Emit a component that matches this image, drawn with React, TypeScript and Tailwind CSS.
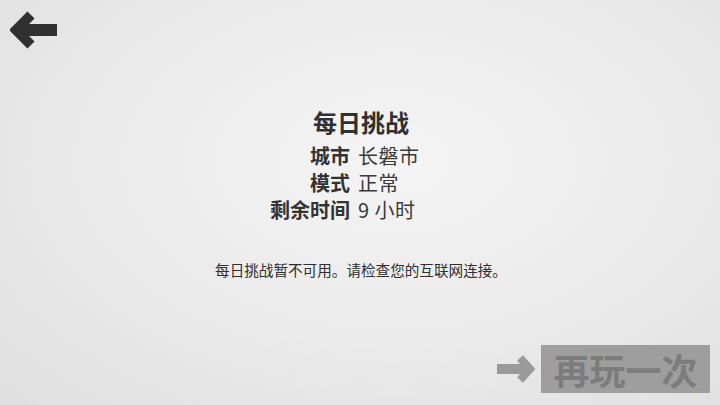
import React from "react";

export default function App() {
  const rows: [string, string][] = [
    ["城市", "长磐市"],
    ["模式", "正常"],
    ["剩余时间", "9 小时"],
  ];
  return (
    <div
      className="w-[720px] h-[405px] flex flex-col overflow-hidden bg-[radial-gradient(ellipse_at_55%_40%,#f4f4f4_0%,#ebebeb_50%,#dfdfdf_100%)]"
      style={{ fontFamily: '"Noto Sans CJK SC", "Noto Sans", sans-serif' }}
    >
      <div className="h-[60px] pl-[10px] pt-[10px]">
        <svg width="50" height="40" viewBox="0 0 50 40">
          <polyline points="21,5 6,20 21,35" fill="none" stroke="#303030" strokeWidth="10" strokeLinejoin="miter" strokeLinecap="butt" />
          <rect x="11" y="14" width="36" height="12" fill="#303030" />
        </svg>
      </div>

      <div className="flex flex-col items-center mt-[46px]">
        <div className="text-[24px] leading-[32px] font-bold text-[#303030] pl-[2px]">每日挑战</div>
      </div>
      <div className="grid grid-cols-[350px_1fr] gap-x-[8px] mt-[4px] text-[20px] leading-[27px]">
        {rows.map(([k, v]) => (
          <React.Fragment key={k}>
            <div className="text-right font-bold text-[#333]">{k}</div>
            <div className="text-[#3a3a3a] tracking-[0.5px]">{v}</div>
          </React.Fragment>
        ))}
      </div>
      <div className="text-center text-[14.6px] leading-[20px] text-[#2e2e2e] mt-[37px] pl-[2px]">
        每日挑战暂不可用。请检查您的互联网连接。
      </div>

      <div className="mt-auto mb-[12px] flex items-center justify-end pr-[10px] gap-[5px]">
        <svg width="40" height="28" viewBox="0 0 40 28">
          <rect x="1" y="9" width="28" height="10" fill="#9a9a9a" />
          <polyline points="24,3 34,14 24,25" fill="none" stroke="#9a9a9a" strokeWidth="8" strokeLinejoin="miter" />
        </svg>
        <div className="w-[169px] h-[48px] bg-[#9e9e9e] flex items-center justify-center text-[36px] leading-[48px] font-bold text-[#7c7c7c]">
          再玩一次
        </div>
      </div>
    </div>
  );
}
